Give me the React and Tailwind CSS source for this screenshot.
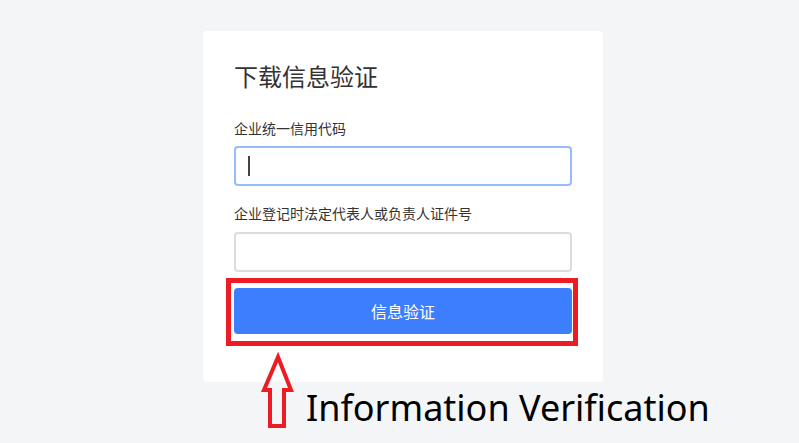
export default function App() {
  return (
    <div className="relative w-[799px] h-[443px] overflow-hidden bg-[#f4f5f7]" style={{ fontFamily: '"Noto Sans CJK SC", "Noto Sans", sans-serif' }}>
      <div className="pt-[31px] pl-[203px]">
        <div className="w-[400px] bg-white rounded-[4px] px-[31px] pt-[33px] pb-[48px]">
          <h1 className="text-[24px] leading-[24px] text-[#333333] font-normal">下载信息验证</h1>
          <div className="mt-[33px] text-[14px] leading-[14px] text-[#333333]">企业统一信用代码</div>
          <div className="mt-[11px] h-[40px] rounded-[4px] border-2 border-[#96bcff] flex items-center pl-[12px]">
            <div className="w-[1.5px] h-[20px] bg-[#444444]"></div>
          </div>
          <div className="mt-[20px] text-[14px] leading-[14px] text-[#333333]">企业登记时法定代表人或负责人证件号</div>
          <div className="mt-[12px] h-[40px] rounded-[4px] border-2 border-[#dcdcdc]"></div>
          <button className="mt-[16px] w-full h-[46px] rounded-[4px] bg-[#3d7eff] text-white text-[16px] leading-[16px] flex items-center justify-center">信息验证</button>
        </div>
      </div>
      <div className="absolute left-[226px] top-[278px] w-[352px] h-[68px] border-[5px] border-[#ed1c24]"></div>
      <svg className="absolute left-[258px] top-[349px]" width="40" height="84" viewBox="0 0 40 84">
        <polygon points="20,8 33,41 26,41 26,77 12,77 12,41 6,41" fill="none" stroke="#ed1c24" strokeWidth="4" strokeLinejoin="miter" />
      </svg>
      <div className="absolute left-[306px] top-[385px] text-[36px] leading-[46px] text-black whitespace-nowrap" style={{ fontFamily: '"Noto Sans", sans-serif' }}>Information Verification</div>
    </div>
  );
}
